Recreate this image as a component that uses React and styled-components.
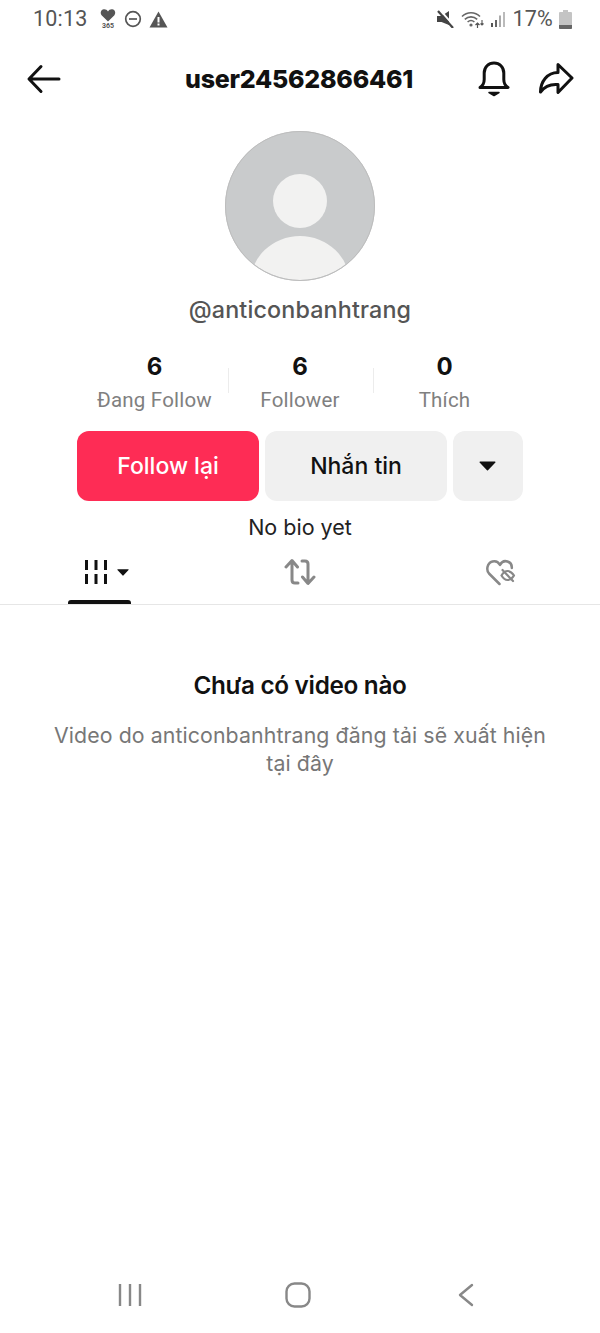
import React from "react";
import styled, { createGlobalStyle } from "styled-components";

const Global = createGlobalStyle`
  html, body { margin: 0; padding: 0; background: #fff; }
  * { box-sizing: border-box; }
`;
const Page = styled.div`
  width: 600px; height: 1333px; background: #fff; display: flex; flex-direction: column;
  font-family: Inter, "Noto Sans", sans-serif; color: #111; overflow: hidden;
`;
const StatusBar = styled.div`
  height: 38px; padding: 0 28px 0 33px; display: flex; align-items: center; justify-content: space-between; color: #555;
`;
const StatusGroup = styled.div`display: flex; align-items: center; gap: ${p => p.$gap || 0}px;`;
const StatusText = styled.span`
  font: 400 21.5px/1 Roboto, sans-serif; color: #555; margin-right: ${p => p.$mr || 0}px; letter-spacing: .2px;
`;
const Header = styled.header`
  height: 60px; margin-top: 11px; padding: 0 26px; display: grid; grid-template-columns: 1fr auto 1fr; align-items: center;
`;
const Title = styled.h1`
  margin: 0 2px 0 0; font: 800 25px/1 Inter, sans-serif; letter-spacing: -.25px; color: #111;
`;
const HeaderRight = styled.div`display: flex; justify-content: flex-end; gap: 27px; align-items: center;`;
const Profile = styled.section`
  display: flex; flex-direction: column; align-items: center; margin-top: 22px;
`;
const Handle = styled.div`
  margin-top: 14px; font: 500 23.3px/30px Inter, sans-serif; color: #555; letter-spacing: .15px;
`;
const Stats = styled.div`
  margin-top: 27px; margin-left: -2px; display: grid; grid-template-columns: 146px 145px 144px;
`;
const Stat = styled.div`
  position: relative; display: flex; flex-direction: column; align-items: center;
  & + &::before {
    content: ""; position: absolute; left: 0; top: 16px; height: 25px; width: 1px; background: #ececec;
  }
`;
const StatNum = styled.div`font: 700 24px/30px Inter, sans-serif; color: #111;`;
const StatLabel = styled.div`margin-top: 4px; font: 400 20.5px/28px Roboto, sans-serif; color: #808080; letter-spacing: .2px;`;
const Buttons = styled.div`margin-top: 17px; display: flex; gap: 6px;`;
const Button = styled.button`
  width: ${p => p.$w}px; height: 70px; border: 0; border-radius: 12px; padding: 0 ${p => p.$pr || 0}px 0 0;
  display: flex; align-items: center; justify-content: center;
  background: ${p => p.$primary ? "#fe2c55" : "#f0f0f0"};
  color: ${p => p.$primary ? "#fff" : "#111"};
  font: 500 23px/1 Inter, sans-serif;
`;
const Bio = styled.div`margin-top: 12px; font: 400 21.5px/28px Inter, "Noto Sans", sans-serif; color: #222;`;
const Tabs = styled.nav`
  height: 64px; border-bottom: 1px solid #e6e6e6; display: grid; grid-template-columns: 199px 1fr 199px;
`;
const Tab = styled.div`
  position: relative; display: flex; align-items: center; justify-content: center; gap: ${p => p.$gap || 0}px;
  padding: 0 0 1px ${p => p.$pl || 0}px;
`;
const Underline = styled.span`
  position: absolute; left: 68px; bottom: 0; width: 63px; height: 4px; background: #111; border-radius: 3px 3px 0 0;
`;
const Empty = styled.section`
  margin-top: 65px; padding: 0 48px; display: flex; flex-direction: column; align-items: center; text-align: center;
`;
const EmptyTitle = styled.h2`margin: 0; font: 600 24.3px/30px Inter, sans-serif; letter-spacing: -.3px; color: #111;`;
const EmptyText = styled.p`margin: 21px 0 0; font: 400 21.3px/28px Inter, "Noto Sans", sans-serif; color: #777; letter-spacing: .1px;`;
const Spacer = styled.div`flex: 1;`;
const NavBar = styled.div`
  height: 76px; padding: 0 50px 0 46px; display: grid; grid-template-columns: 1fr 1fr 1fr; align-items: center; justify-items: center;
`;

const Heart365 = () => (
  <svg width="18" height="22" viewBox="0 0 18 22">
    <path d="M9 13.500 2.800 7.500C.8 5.300 1.800 1.600 4.800 1.300 6.600 1.100 8 2 9 3.400 10 2 11.400 1.100 13.200 1.300 16.200 1.600 17.200 5.300 15.200 7.500Z" fill="#555" />
    <text x="9" y="20" textAnchor="middle" fontFamily="Roboto, sans-serif" fontSize="7" fontWeight="700" fill="#555">365</text>
  </svg>
);
const Dnd = () => (
  <svg width="18" height="18" viewBox="0 0 18 18" fill="none" stroke="#555" strokeWidth="1.7">
    <circle cx="9" cy="9" r="7.300" /><path d="M5 9h8" />
  </svg>
);
const Warn = () => (
  <svg width="19" height="17" viewBox="0 0 19 17">
    <path fillRule="evenodd" d="M9.500.5 18.500 16.500H.5ZM8.500 6v5.500h2V6ZM8.500 12.500v2h2v-2Z" fill="#555" />
  </svg>
);
const Mute = () => (
  <svg width="18" height="18" viewBox="0 0 18 18">
    <path d="M0 5h4.500L12 0v14L4.500 11H0Z" fill="#444" transform="translate(0 1)" />
    <path d="M3 0 18 17" stroke="#fff" strokeWidth="2" />
    <path d="M1 1 16 18" stroke="#444" strokeWidth="2.200" />
  </svg>
);
const Wifi = () => (
  <svg width="24" height="19" viewBox="0 0 24 19" fill="none">
    <path d="M1 6.500C6 1.500 14 1.500 19 6.500M3.800 9.300C7.400 6 12.600 6 16.200 9.300M6.600 12C8.600 10.200 11.400 10.200 13.400 12" stroke="#666" strokeWidth="1.600" />
    <circle cx="10" cy="15" r="1.600" fill="#666" />
    <path d="M16.500 18v-5M14.500 15l2-2 2 2" stroke="#555" strokeWidth="1.200" fill="none" />
    <path d="M21 10v5M19.500 13.500l1.500 1.500 1.500-1.500" stroke="#555" strokeWidth="1.100" />
  </svg>
);
const Signal = () => (
  <svg width="15" height="17" viewBox="0 0 15 17">
    <rect x="0" y="12" width="2" height="4" fill="#555" />
    <rect x="4" y="9" width="2" height="7" fill="#666" />
    <rect x="8" y="4.500" width="2" height="11.500" fill="#aaa" />
    <rect x="12" y="1" width="2" height="15" fill="#bbb" />
  </svg>
);
const Battery = () => (
  <svg width="13" height="19" viewBox="0 0 13 19">
    <path d="M4 0h5v2h3a1 1 0 0 1 1 1v15a1 1 0 0 1-1 1H1a1 1 0 0 1-1-1V3a1 1 0 0 1 1-1h3Z" fill="#c4c4c4" />
    <path d="M0 15h13v3a1 1 0 0 1-1 1H1a1 1 0 0 1-1-1Z" fill="#666" />
  </svg>
);
const Back = () => (
  <svg width="36" height="30" viewBox="0 0 36 30" fill="none" stroke="#111" strokeWidth="3" strokeLinecap="round" strokeLinejoin="round">
    <path d="M33 15H3.500M15 2.500 3 15l12 12.500" />
  </svg>
);
const Bell = () => (
  <svg width="34" height="36" viewBox="0 0 34 36" fill="none" stroke="#111" strokeWidth="3" strokeLinejoin="round" strokeLinecap="round">
    <path d="M3 26.500c3-2 4.200-4 4.200-8V12C7.200 6 11.500 2 17 2s9.800 4 9.800 10v6.500c0 4 1.200 6 4.200 8Z" />
    <path d="M12 31.500h10l-5 3Z" fill="#111" strokeWidth="1.500" />
  </svg>
);
const Share = () => (
  <svg width="36" height="34" viewBox="0 0 36 34" fill="none" stroke="#111" strokeWidth="3" strokeLinejoin="round" strokeLinecap="round">
    <path d="M20 2.500 34 16 20 30.500V22.500C12 21.800 6.500 24.500 2.500 30 2.500 20 9 10.500 20 10.500Z" />
  </svg>
);
const Avatar = () => (
  <svg width="150" height="150" viewBox="0 0 150 150">
    <defs><clipPath id="av"><circle cx="75" cy="75" r="74" /></clipPath></defs>
    <circle cx="75" cy="75" r="75" fill="#c9cbcc" />
    <circle cx="75" cy="70" r="27" fill="#f2f2f1" />
    <g clipPath="url(#av)"><ellipse cx="75" cy="153" rx="50" ry="48" fill="#f2f2f1" /></g>
    <circle cx="75" cy="75" r="74.500" fill="none" stroke="#bdbdbd" strokeWidth="1" />
  </svg>
);
const Caret = ({ w = 17, h = 10 }) => (
  <svg width={w} height={h} viewBox="0 0 17 10"><path d="M1 .5h15a.6.6 0 0 1 .4 1L9 9.300a.8.8 0 0 1-1 0L.6 1.500A.6.6 0 0 1 1 .5Z" fill="#111" /></svg>
);
const Grid = () => (
  <svg width="24" height="26" viewBox="0 0 24 26" stroke="#111" strokeWidth="3">
    <path d="M2.500 1v10M12 1v10M21.500 1v10M2.500 15v10M12 15v10M21.500 15v10" />
  </svg>
);
const Repost = () => (
  <svg width="32" height="28" viewBox="0 0 32 28" fill="none" stroke="#888" strokeWidth="3" strokeLinecap="round" strokeLinejoin="round">
    <path d="M2 9 8 2.500 13.500 9M8 3v19c0 2 1 3 3 3h3" />
    <path d="M30 19l-6 6.500L18.500 19M24 25V6c0-2-1-3-3-3h-3" />
  </svg>
);
const HeartHidden = () => (
  <svg width="30" height="27" viewBox="0 0 30 27" fill="none" stroke="#888" strokeWidth="2.500" strokeLinecap="round" strokeLinejoin="round">
    <path d="M13.500 25 3 14.500C0 11 1 4 6.500 2.500 9.500 1.700 12.300 3 14 6 15.500 3 18.500 1.500 21.500 2.500 24.500 3.500 26 6 25.800 9" />
    <path d="M15.500 16.500c1.800-3 4-4.500 6-4.500s4.700 1.500 6.500 4.500c-1.800 3-4.500 4.500-6.500 4.500s-4.200-1.500-6-4.500Z" strokeWidth="2.200" />
    <path d="M16.500 11 27 22" strokeWidth="2.200" />
  </svg>
);
const Recents = () => (
  <svg width="24" height="24" viewBox="0 0 24 24" stroke="#888" strokeWidth="2.400">
    <path d="M2 1v22M12 1v22M22 1v22" />
  </svg>
);
const Home = () => (
  <svg width="26" height="26" viewBox="0 0 26 26" fill="none" stroke="#888" strokeWidth="2.400">
    <rect x="1.500" y="1.500" width="23" height="23" rx="8" />
  </svg>
);
const NavBack = () => (
  <svg width="16" height="24" viewBox="0 0 16 24" fill="none" stroke="#888" strokeWidth="2.400" strokeLinecap="round" strokeLinejoin="round">
    <path d="M14 2 2 12l12 10" />
  </svg>
);

const stats = [
  { n: 6, l: "Đang Follow" },
  { n: 6, l: "Follower" },
  { n: 0, l: "Thích" },
];

export default function App() {
  return (
    <Page>
      <Global />
      <StatusBar>
        <StatusGroup $gap={7}>
          <StatusText $mr={4}>10:13</StatusText>
          <Heart365 /><Dnd /><Warn />
        </StatusGroup>
        <StatusGroup $gap={6}>
          <Mute /><Wifi /><Signal />
          <StatusText>17%</StatusText>
          <Battery />
        </StatusGroup>
      </StatusBar>
      <Header>
        <Back />
        <Title>user24562866461</Title>
        <HeaderRight><Bell /><Share /></HeaderRight>
      </Header>
      <Profile>
        <Avatar />
        <Handle>@anticonbanhtrang</Handle>
        <Stats>
          {stats.map(s => (
            <Stat key={s.l}>
              <StatNum>{s.n}</StatNum>
              <StatLabel>{s.l}</StatLabel>
            </Stat>
          ))}
        </Stats>
        <Buttons>
          <Button $primary $w={182}>Follow lại</Button>
          <Button $w={182}>Nhắn tin</Button>
          <Button $w={70} $pr={2}><Caret /></Button>
        </Buttons>
        <Bio>No bio yet</Bio>
      </Profile>
      <Tabs>
        <Tab $gap={9} $pl={13}>
          <Grid />
          <Caret w={12} h={7} />
          <Underline />
        </Tab>
        <Tab><Repost /></Tab>
        <Tab><HeartHidden /></Tab>
      </Tabs>
      <Empty>
        <EmptyTitle>Chưa có video nào</EmptyTitle>
        <EmptyText>Video do anticonbanhtrang đăng tải sẽ xuất hiện tại đây</EmptyText>
      </Empty>
      <Spacer />
      <NavBar><Recents /><Home /><NavBack /></NavBar>
    </Page>
  );
}
